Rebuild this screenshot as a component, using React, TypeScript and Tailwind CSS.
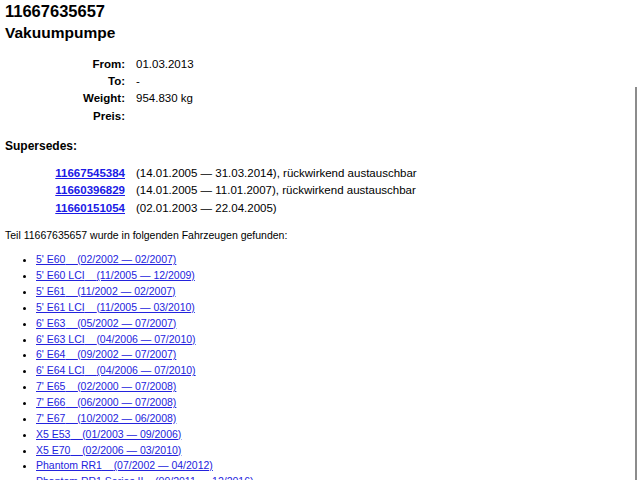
const details = [
  { label: 'From:', value: '01.03.2013' },
  { label: 'To:', value: '-' },
  { label: 'Weight:', value: '954.830 kg' },
  { label: 'Preis:', value: '' },
];

const supersedes = [
  { part: '11667545384', note: '(14.01.2005 — 31.03.2014), rückwirkend austauschbar' },
  { part: '11660396829', note: '(14.01.2005 — 11.01.2007), rückwirkend austauschbar' },
  { part: '11660151054', note: '(02.01.2003 — 22.04.2005)' },
];

const vehicles = [
  { model: "5' E60", range: '(02/2002 — 02/2007)' },
  { model: "5' E60 LCI", range: '(11/2005 — 12/2009)' },
  { model: "5' E61", range: '(11/2002 — 02/2007)' },
  { model: "5' E61 LCI", range: '(11/2005 — 03/2010)' },
  { model: "6' E63", range: '(05/2002 — 07/2007)' },
  { model: "6' E63 LCI", range: '(04/2006 — 07/2010)' },
  { model: "6' E64", range: '(09/2002 — 07/2007)' },
  { model: "6' E64 LCI", range: '(04/2006 — 07/2010)' },
  { model: "7' E65", range: '(02/2000 — 07/2008)' },
  { model: "7' E66", range: '(06/2000 — 07/2008)' },
  { model: "7' E67", range: '(10/2002 — 06/2008)' },
  { model: 'X5 E53', range: '(01/2003 — 09/2006)' },
  { model: 'X5 E70', range: '(02/2006 — 03/2010)' },
  { model: 'Phantom RR1', range: '(07/2002 — 04/2012)' },
  { model: 'Phantom RR1 Series II', range: '(09/2011 — 12/2016)' },
  { model: 'Phantom RR2', range: '(07/2007 — 12/2016)' },
];

export default function App() {
  return (
    <div className="relative h-[480px] w-[640px] overflow-hidden bg-white px-[5px] font-['Liberation_Sans',Arial,sans-serif] text-black">
      <h1 className="pt-[1px] text-[16.5px] leading-[20px] font-bold">11667635657</h1>
      <h2 className="mt-[2px] text-[15.5px] leading-[20px] font-bold">Vakuumpumpe</h2>

      <div className="mt-[12.5px] grid grid-cols-[120px_1fr] gap-x-[11px] text-[11.5px] leading-[17.4px]">
        {details.map((row) => (
          <div key={row.label} className="contents">
            <div className="text-right font-bold">{row.label}</div>
            <div>{row.value}</div>
          </div>
        ))}
      </div>

      <h3 className="mt-[13px] text-[12px] leading-[16px] font-bold">Supersedes:</h3>

      <div className="mt-[10.5px] grid grid-cols-[120px_1fr] gap-x-[11px] text-[11.5px] leading-[17.5px]">
        {supersedes.map((row) => (
          <div key={row.part} className="contents">
            <div className="text-right">
              <a href="#" className="font-bold text-[#1a1ae6] underline">
                {row.part}
              </a>
            </div>
            <div>{row.note}</div>
          </div>
        ))}
      </div>

      <p className="mt-[11.3px] text-[10.5px] leading-[14px]">
        Teil 11667635657 wurde in folgenden Fahrzeugen gefunden:
      </p>

      <ul className="mt-[10px] list-disc pl-[31px] text-[10.5px] leading-[15.85px]">
        {vehicles.map((v) => (
          <li key={v.model}>
            <a href="#" className="text-[#2323dd] underline">
              {v.model}
              {'\u00a0\u00a0\u00a0\u00a0'}
              {v.range}
            </a>
          </li>
        ))}
      </ul>

      <div className="absolute top-[87px] right-[3px] bottom-0 w-[2px] bg-[#8c8c8c]" />
    </div>
  );
}
